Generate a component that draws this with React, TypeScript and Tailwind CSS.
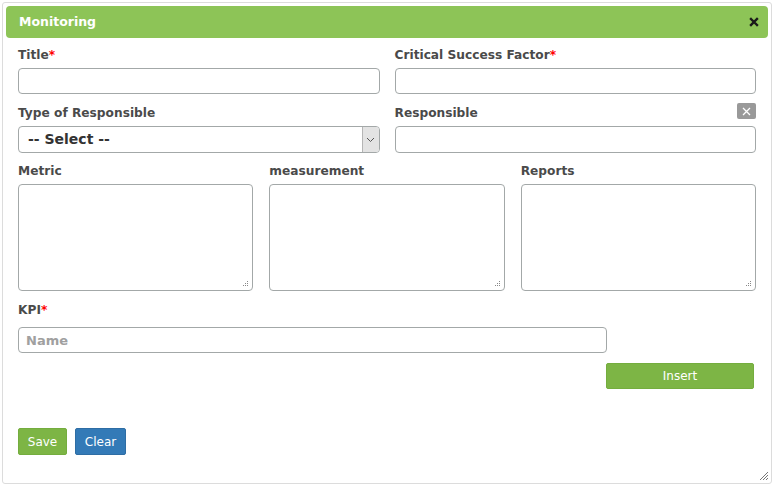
import React from 'react';

const font = { fontFamily: '"DejaVu Sans", Verdana, sans-serif' };

function Label({ text, required }: { text: string; required?: boolean }) {
  return (
    <div className="h-[18px] pt-[1px] text-[12.2px] leading-[18px] font-bold text-[#4a4a4a]">
      {text}
      {required && <span className="text-[#ff0000]">*</span>}
    </div>
  );
}

function Grip() {
  return (
    <svg className="absolute right-[3px] bottom-[3px]" width="7" height="7" viewBox="0 0 7 7">
      <rect x="5" y="1" width="1" height="1" fill="#888" />
      <rect x="3" y="3" width="1" height="1" fill="#888" />
      <rect x="5" y="3" width="1" height="1" fill="#888" />
      <rect x="1" y="5" width="1" height="1" fill="#888" />
      <rect x="3" y="5" width="1" height="1" fill="#888" />
      <rect x="5" y="5" width="1" height="1" fill="#888" />
    </svg>
  );
}

function Area({ label }: { label: string }) {
  return (
    <div>
      <Label text={label} />
      <div className="relative mt-[5px] h-[107px] rounded-[4px] border border-[#a3a8a8] bg-white">
        <textarea className="h-full w-full resize-none bg-transparent outline-none" />
        <Grip />
      </div>
    </div>
  );
}

const inputBase =
  'block h-[26px] rounded-[4px] border border-[#a3a8a8] bg-white px-[7px] text-[13px] outline-none';
const inputCls = `${inputBase} w-full`;

export default function App() {
  return (
    <div className="h-[488px] w-[776px] bg-white pl-[2px] pt-[2px]" style={font}>
      <div className="relative h-[482px] w-[770px] rounded-[3px] border border-[#dcdcdc] p-[3px]">
        {/* Header */}
        <div className="flex h-[32px] items-center justify-between rounded-[4px] bg-[#8dc457] pl-[13px] pr-[9px]">
          <span className="text-[12.5px] font-bold text-white">Monitoring</span>
          <svg width="10" height="10" viewBox="0 0 10 10">
            <path d="M2 2 L8 8 M8 2 L2 8" stroke="#1a1a1a" strokeWidth="2.4" strokeLinecap="square" />
          </svg>
        </div>

        <div className="pl-[12px] pr-[12px] pt-[7px]">
          {/* Row 1 */}
          <div className="grid grid-cols-2 gap-x-[15px]">
            <div>
              <Label text="Title" required />
              <input className={`${inputCls} mt-[5px]`} />
            </div>
            <div>
              <Label text="Critical Success Factor" required />
              <input className={`${inputCls} mt-[5px]`} />
            </div>
          </div>

          {/* Row 2 */}
          <div className="mt-[9px] grid grid-cols-2 gap-x-[15px]">
            <div>
              <Label text="Type of Responsible" />
              <div className="mt-[5px] flex h-[27px] items-stretch overflow-hidden rounded-[4px] border border-[#a3a8a8] bg-white">
                <div className="flex flex-1 items-center pl-[9px] text-[14px] font-bold text-[#333]">-- Select --</div>
                <div className="flex w-[17px] items-center justify-center border-l border-[#b5b5b5] bg-[#e3e3e3]">
                  <svg width="9" height="6" viewBox="0 0 9 6">
                    <path d="M1 1 L4.5 4.5 L8 1" fill="none" stroke="#555" strokeWidth="1" />
                  </svg>
                </div>
              </div>
            </div>
            <div>
              <div className="flex items-start justify-between">
                <Label text="Responsible" />
                <div className="flex h-[16px] w-[19px] items-center justify-center rounded-[2px] bg-[#999]">
                  <svg width="9" height="9" viewBox="0 0 9 9">
                    <path d="M1 1 L8 8 M8 1 L1 8" stroke="#fff" strokeWidth="1.3" />
                  </svg>
                </div>
              </div>
              <input className={`${inputCls} mt-[5px] h-[27px]`} />
            </div>
          </div>

          {/* Row 3 */}
          <div className="mt-[8px] grid grid-cols-3 gap-x-[16px]">
            <Area label="Metric" />
            <Area label="measurement" />
            <Area label="Reports" />
          </div>

          {/* KPI */}
          <div className="mt-[9px]">
            <Label text="KPI" required />
            <input
              className={`${inputBase} mt-[9px] w-[589px] font-bold placeholder:text-[#a0a0a0]`}
              placeholder="Name"
            />
          </div>

          <div className="mt-[10px] flex justify-end pr-[2px]">
            <button className="h-[26px] w-[148px] rounded-[2px] border border-[#74ad3e] bg-[#7db545] text-[12px] text-white">
              Insert
            </button>
          </div>

          <div className="mt-[39px] flex gap-[8px]">
            <button className="h-[27px] w-[49px] rounded-[2px] border border-[#74ad3e] bg-[#7db545] text-[12px] text-white">
              Save
            </button>
            <button className="h-[27px] w-[51px] rounded-[2px] border border-[#2e6da4] bg-[#337ab7] text-[12px] text-white">
              Clear
            </button>
          </div>
        </div>

        {/* Resize handle */}
        <svg className="absolute bottom-[2px] right-[2px]" width="10" height="10" viewBox="0 0 10 10">
          <path d="M9 1 L1 9 M9 4 L4 9 M9 7 L7 9" stroke="#777" strokeWidth="1" />
        </svg>
      </div>
    </div>
  );
}
